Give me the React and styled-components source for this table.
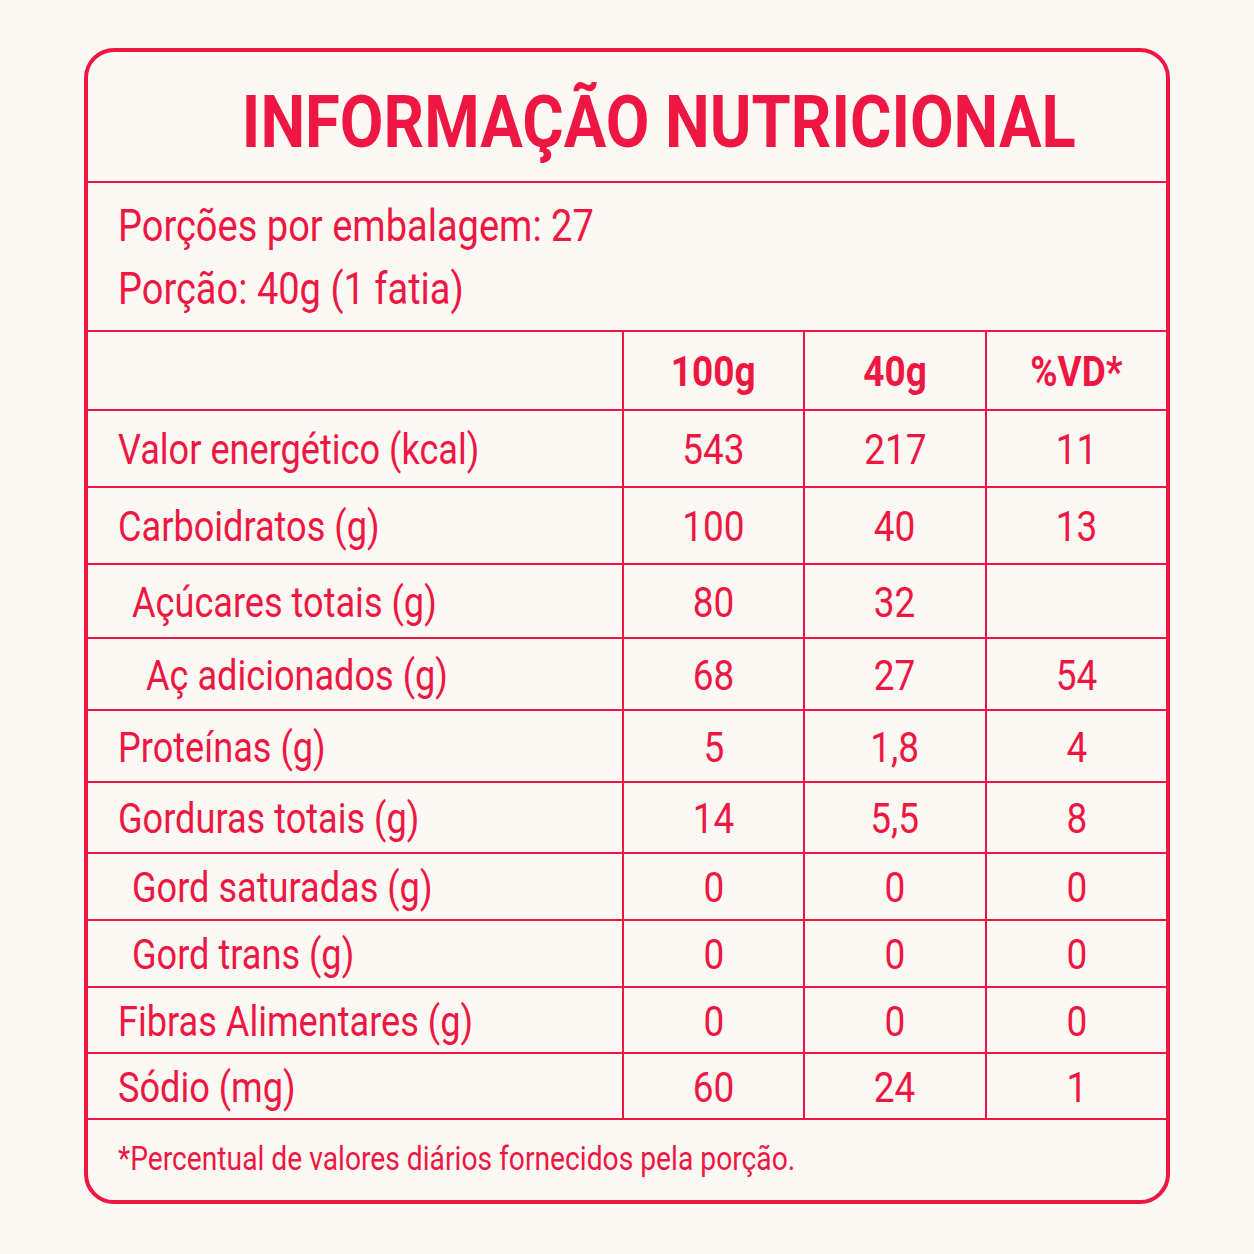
import React from 'react';
import styled, { createGlobalStyle } from 'styled-components';

const RED = '#ee1743';
const BG = '#fcf9f4';

const GlobalStyle = createGlobalStyle`
  html, body {
    margin: 0;
    padding: 0;
    background: ${BG};
  }
  body {
    font-family: Roboto, "Liberation Sans", sans-serif;
    color: ${RED};
  }
`;

const Page = styled.div`
  width: 1254px;
  height: 1254px;
  box-sizing: border-box;
  padding: 48px 84px;
  background: ${BG};
`;

const Card = styled.section`
  box-sizing: border-box;
  width: 1086px;
  height: 1156px;
  border: 4px solid ${RED};
  border-radius: 30px;
  overflow: hidden;
  display: flex;
  flex-direction: column;
`;

/* condensed look: Roboto squeezed sideways */
const Narrow = styled.span`
  display: inline-block;
  white-space: nowrap;
  transform: scaleX(${(p) => p.sx || 0.88});
  transform-origin: ${(p) => p.origin || 'left center'};
`;

const TitleBar = styled.header`
  height: 131px;
  border-bottom: 2px solid ${RED};
  display: flex;
  align-items: center;
  justify-content: center;
  padding: 12px 0 0 64px;
  box-sizing: border-box;
`;

const Title = styled.h1`
  margin: 0;
  font-size: 72px;
  font-weight: 700;
  line-height: 1;
`;

const Serving = styled.div`
  height: 149px;
  box-sizing: border-box;
  border-bottom: 2px solid ${RED};
  padding: 11px 0 0 30px;
  display: flex;
  flex-direction: column;
`;

const ServingLine = styled.p`
  margin: 0;
  font-size: 45px;
  line-height: 63px;
`;

const Row = styled.div`
  display: grid;
  grid-template-columns: 1fr 181px 182px 181px;
  height: ${(p) => p.h}px;
  box-sizing: border-box;
  border-bottom: 2px solid ${RED};
`;

const Label = styled.div`
  display: flex;
  align-items: center;
  padding: 2px 0 0 ${(p) => 30 + (p.indent || 0) * 14}px;
  font-size: 42px;
`;

const Cell = styled.div`
  display: flex;
  align-items: center;
  justify-content: center;
  padding-top: 2px;
  border-left: 2px solid ${RED};
  font-size: 42px;
  font-weight: ${(p) => (p.bold ? 700 : 400)};
`;

const Footer = styled.footer`
  flex: 1;
  display: flex;
  align-items: center;
  padding: 0 0 4px 30px;
  font-size: 34px;
`;

const rows = [
  { label: 'Valor energético (kcal)', v: ['543', '217', '11'], h: 77 },
  { label: 'Carboidratos (g)', v: ['100', '40', '13'], h: 77 },
  { label: 'Açúcares totais (g)', v: ['80', '32', ''], h: 74, indent: 1 },
  { label: 'Aç adicionados (g)', v: ['68', '27', '54'], h: 72, indent: 2 },
  { label: 'Proteínas (g)', v: ['5', '1,8', '4'], h: 72 },
  { label: 'Gorduras totais (g)', v: ['14', '5,5', '8'], h: 71 },
  { label: 'Gord saturadas (g)', v: ['0', '0', '0'], h: 67, indent: 1 },
  { label: 'Gord trans (g)', v: ['0', '0', '0'], h: 67, indent: 1 },
  { label: 'Fibras Alimentares (g)', v: ['0', '0', '0'], h: 66 },
  { label: 'Sódio (mg)', v: ['60', '24', '1'], h: 66 },
];

export default function App() {
  return (
    <Page>
      <GlobalStyle />
      <Card>
        <TitleBar>
          <Title>
            <Narrow origin="center">INFORMAÇÃO NUTRICIONAL</Narrow>
          </Title>
        </TitleBar>
        <Serving>
          <ServingLine>
            <Narrow sx={0.845}>Porções por embalagem: 27</Narrow>
          </ServingLine>
          <ServingLine>
            <Narrow sx={0.845}>Porção: 40g (1 fatia)</Narrow>
          </ServingLine>
        </Serving>
        <Row h={79}>
          <Label />
          <Cell bold><Narrow origin="center">100g</Narrow></Cell>
          <Cell bold><Narrow origin="center">40g</Narrow></Cell>
          <Cell bold><Narrow origin="center">%VD*</Narrow></Cell>
        </Row>
        {rows.map((r) => (
          <Row key={r.label} h={r.h}>
            <Label indent={r.indent}>
              <Narrow sx={0.86}>{r.label}</Narrow>
            </Label>
            {r.v.map((val, i) => (
              <Cell key={i}>
                <Narrow origin="center">{val}</Narrow>
              </Cell>
            ))}
          </Row>
        ))}
        <Footer>
          <Narrow sx={0.83}>*Percentual de valores diários fornecidos pela porção.</Narrow>
        </Footer>
      </Card>
    </Page>
  );
}
